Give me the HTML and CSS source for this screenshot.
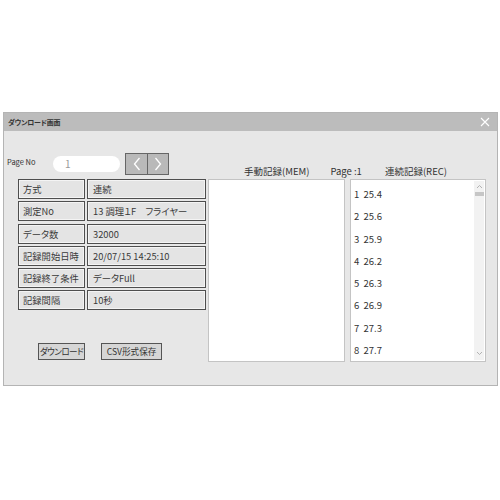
FILE: index.html
```html
<!DOCTYPE html>
<html lang="ja">
<head>
<meta charset="utf-8">
<link rel="stylesheet" href="styles.css">
</head>
<body>
<div class="window">
  <div class="titlebar">
    <span class="title">ダウンロード画面</span>
    <svg class="close" width="10" height="10" viewBox="0 0 10 10"><path d="M1 1 L9 9 M9 1 L1 9" stroke="#fff" stroke-width="1.1" fill="none"/></svg>
  </div>
  <div class="content">
    <div class="left">
      <div class="pagerow">
        <span class="pagelabel">Page No</span>
        <div class="pageinput">1</div>
        <div class="navs">
          <div class="nav"><svg width="10" height="14" viewBox="0 0 10 14"><path d="M7.5 1 L2.5 7 L7.5 13" stroke="#fff" stroke-width="1.3" fill="none"/></svg></div>
          <div class="nav"><svg width="10" height="14" viewBox="0 0 10 14"><path d="M2.5 1 L7.5 7 L2.5 13" stroke="#fff" stroke-width="1.3" fill="none"/></svg></div>
        </div>
      </div>
      <div class="info">
        <div class="cell label">方式</div><div class="cell value">連続</div>
        <div class="cell label">測定No</div><div class="cell value">13 調理１F　フライヤー</div>
        <div class="cell label">データ数</div><div class="cell value">32000</div>
        <div class="cell label">記録開始日時</div><div class="cell value">20/07/15 14:25:10</div>
        <div class="cell label">記録終了条件</div><div class="cell value">データFull</div>
        <div class="cell label">記録間隔</div><div class="cell value">10秒</div>
      </div>
      <div class="actions">
        <div class="btn btn-dl">ダウンロード</div>
        <div class="btn btn-csv">CSV形式保存</div>
      </div>
    </div>
    <div class="right">
      <div class="heads">
        <span class="head-mem">手動記録(MEM)</span>
        <span class="head-page">Page :1</span>
        <span class="head-rec">連続記録(REC)</span>
      </div>
      <div class="panels">
        <div class="panel mem"></div>
        <div class="panel rec">
          <div class="list">
            <div>1&nbsp; 25.4</div>
            <div>2&nbsp; 25.6</div>
            <div>3&nbsp; 25.9</div>
            <div>4&nbsp; 26.2</div>
            <div>5&nbsp; 26.3</div>
            <div>6&nbsp; 26.9</div>
            <div>7&nbsp; 27.3</div>
            <div>8&nbsp; 27.7</div>
          </div>
          <div class="scrollbar">
            <svg class="arrow" width="7" height="5" viewBox="0 0 7 5"><path d="M1 4 L3.5 1.5 L6 4" stroke="#aaa" stroke-width="0.9" fill="none"/></svg>
            <div class="thumb"></div>
            <div class="track"></div>
            <svg class="arrow" width="7" height="5" viewBox="0 0 7 5"><path d="M1 1 L3.5 3.5 L6 1" stroke="#aaa" stroke-width="0.9" fill="none"/></svg>
          </div>
        </div>
      </div>
    </div>
  </div>
</div>
</body>
</html>
```
FILE: styles.css
```css
* { box-sizing: border-box; }
html, body { margin: 0; padding: 0; background: #fff; }
body {
  font-family: "Noto Sans CJK JP", "Noto Sans", sans-serif;
  font-feature-settings: "palt";
  color: #333;
  padding-top: 112px;
  padding-left: 3px;
}
.window {
  width: 495px;
  height: 274px;
  border: 1px solid #b4b4b4;
  background: #e7e7e7;
  display: flex;
  flex-direction: column;
}
.titlebar {
  height: 18px;
  background: #bcbcbc;
  display: flex;
  align-items: center;
  justify-content: space-between;
  padding: 0 7px 0 4px;
}
.title {
  font-size: 7px;
  font-weight: bold;
  color: #333;
  letter-spacing: -0.2px;
}
.close { display: block; }
.content {
  flex: 1;
  display: flex;
  padding-top: 22px;
}
.left {
  width: 201px;
  padding-left: 3px;
  display: flex;
  flex-direction: column;
}
.pagerow {
  display: flex;
  align-items: center;
  height: 21px;
}
.pagelabel {
  font-size: 7.5px;
  width: 46px;
  color: #333;
  margin-top: -4px;
}
.pageinput {
  width: 67px;
  height: 16px;
  background: #fff;
  border-radius: 8px;
  font-size: 10px;
  color: #999;
  line-height: 16px;
  padding-left: 12px;
}
.navs {
  display: flex;
  margin-left: 5px;
  border: 1px solid #666;
}
.nav {
  width: 21px;
  height: 20px;
  background: #b9b9b9;
  display: flex;
  align-items: center;
  justify-content: center;
}
.nav + .nav { border-left: 1px solid #666; }
.info {
  margin-top: 5px;
  margin-left: 11px;
  display: grid;
  grid-template-columns: 67px 119px;
  column-gap: 2px;
  row-gap: 2.3px;
}
.cell {
  height: 20px;
  border: 1px solid #4e4e4e;
  box-shadow: inset 0 0 0 1px #f4f4f4;
  background: #e4e4e4;
  font-size: 9.3px;
  line-height: 18px;
  padding-left: 4px;
  white-space: nowrap;
  overflow: hidden;
  color: #3a3a3a;
}
.value { padding-left: 5px; }
.actions {
  display: flex;
  margin-top: 33px;
  margin-left: 31px;
}
.btn {
  height: 17px;
  border: 1px solid #555;
  background: #d6d6d6;
  font-size: 8.6px;
  line-height: 15px;
  text-align: center;
  color: #333;
  white-space: nowrap;
  overflow: hidden;
}
.btn-dl { width: 47px; font-size: 8.6px; letter-spacing: -0.6px; }
.btn-csv { width: 61px; margin-left: 16px; }
.right {
  flex: 1;
  padding-left: 3px;
  display: flex;
  flex-direction: column;
}
.heads {
  height: 26px;
  font-size: 9.5px;
  color: #333;
  display: flex;
  align-items: center;
  padding-top: 10px;
}
.head-mem { margin-left: 36px; }
.head-page { margin-left: 21px; }
.head-rec { margin-left: 23px; }
.panels {
  display: flex;
  gap: 5px;
}
.panel {
  height: 183px;
  background: #fff;
  border: 1px solid #c4c4c4;
}
.mem { width: 137px; }
.rec {
  width: 136px;
  display: flex;
}
.list {
  flex: 1;
  padding-top: 3px;
  padding-left: 3px;
  font-size: 9.5px;
  line-height: 22.3px;
  color: #333;
}
.scrollbar {
  width: 10px;
  margin: 1px 1px 1px 0;
  background: #f2f2f2;
  display: flex;
  flex-direction: column;
  align-items: center;
}
.arrow { margin-top: 3px; }
.scrollbar .arrow:last-child { margin-top: 0; margin-bottom: 4px; }
.thumb {
  width: 9px;
  height: 4px;
  background: #c6c6c6;
  margin-top: 3px;
}
.track { flex: 1; }
```
